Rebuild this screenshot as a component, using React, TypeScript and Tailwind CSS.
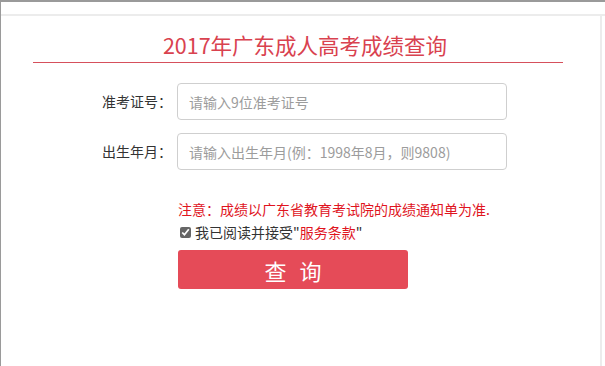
export default function App() {
  const font = { fontFamily: '"Noto Sans CJK SC", "Liberation Sans", sans-serif' };
  return (
    <div
      className="w-[605px] h-[366px] overflow-hidden bg-white border-t-2 border-l border-[#9a9a9a] flex"
      style={font}
    >
      <div className="flex-1 flex flex-col">
        <div className="h-[14px] border-b-2 border-[#ececec]" />
        <div className="flex-1 ml-px mr-[3px] border-r-2 border-[#ececec] flex flex-col">
          {/* Title */}
          <div className="h-[46px] flex items-end justify-center pb-[7px]">
            <h1 className="text-[21.5px] leading-none text-[#d9424f] ml-[8px]">
              2017年广东成人高考成绩查询
            </h1>
          </div>
          <div className="ml-[31px] w-[530px] h-px bg-[#d6505c]" />

          {/* Form */}
          <div className="mt-[20px] flex flex-col gap-[13px]">
            <div className="flex items-center">
              <label className="w-[171px] text-right text-[14px] text-[#333] pr-[1px]">准考证号：</label>
              <input
                className="ml-[4px] w-[330px] h-[37px] border border-[#cfcfcf] rounded-[4px] px-[11px] text-[14px] outline-none placeholder:text-[#9c9c9c]"
                placeholder="请输入9位准考证号"
                style={font}
              />
            </div>
            <div className="flex items-center">
              <label className="w-[171px] text-right text-[14px] text-[#333] pr-[1px]">出生年月：</label>
              <input
                className="ml-[4px] w-[330px] h-[37px] border border-[#cfcfcf] rounded-[4px] px-[11px] text-[14px] outline-none placeholder:text-[#9c9c9c]"
                placeholder="请输入出生年月(例：1998年8月，则9808)"
                style={font}
              />
            </div>
          </div>

          <div className="ml-[176px] mt-[29px] flex flex-col">
            <p className="text-[14px] leading-[20px] text-[#e0141e]">
              注意：成绩以广东省教育考试院的成绩通知单为准.
            </p>
            <label className="mt-[3px] flex items-center text-[14px] leading-[20px] text-[#333]">
              <input type="checkbox" defaultChecked className="w-[11px] h-[11px] ml-[2px] mr-[4px] accent-[#666]" />
              <span>
                我已阅读并接受"<span className="text-[#e0141e]">服务条款</span>"
              </span>
            </label>
            <button
              className="mt-[8px] w-[230px] h-[39px] rounded-[3px] bg-[#e54b58] text-white text-[22px] tracking-[13px] pl-[13px] leading-none"
              style={font}
            >
              查询
            </button>
          </div>
        </div>
      </div>
    </div>
  );
}
